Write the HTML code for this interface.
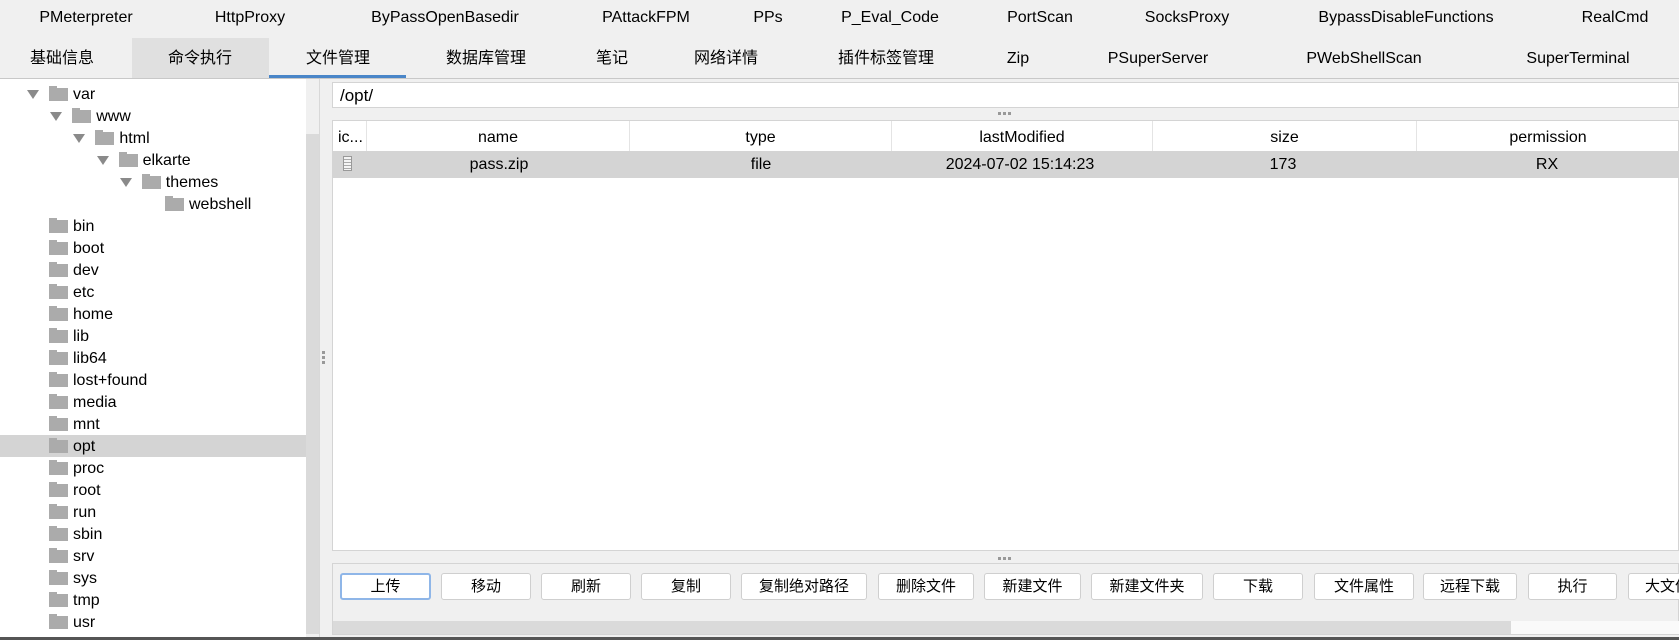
<!DOCTYPE html>
<html><head><meta charset="utf-8"><style>
*{margin:0;padding:0;box-sizing:border-box}
body{width:1679px;height:640px;background:#f0f0f0;font-family:"Liberation Sans","Noto Sans CJK SC",sans-serif;font-size:16px;color:#000;position:relative;overflow:hidden}
.a{position:absolute;white-space:nowrap}
.c{position:absolute;transform:translate(-50%,-50%);white-space:nowrap;line-height:20px;height:20px}
.btn{position:absolute;top:573px;height:27px;background:#fff;border:1px solid #cfcfcf;border-radius:3px;text-align:center;line-height:25px;font-size:15px}
.f{position:absolute;width:19px;height:15px}
.f:before{content:"";position:absolute;left:0;top:0;width:8px;height:3px;background:#ababab}
.f:after{content:"";position:absolute;left:0;top:2px;width:19px;height:13px;background:#ababab}
.ar{position:absolute;width:0;height:0;border-left:6px solid transparent;border-right:6px solid transparent;border-top:9px solid #8a8a8a}
.t{position:absolute;font-size:16px;line-height:20px;height:20px;transform:translateY(-50%)}
.h{position:absolute;top:121px;height:30px;border-right:1px solid #e4e4e4;text-align:center;line-height:34px}
</style></head><body>
<!-- top row -->
<span class="c" style="left:86px;top:18px">PMeterpreter</span>
<span class="c" style="left:250px;top:18px">HttpProxy</span>
<span class="c" style="left:445px;top:18px">ByPassOpenBasedir</span>
<span class="c" style="left:646px;top:18px">PAttackFPM</span>
<span class="c" style="left:768px;top:18px">PPs</span>
<span class="c" style="left:890px;top:18px">P_Eval_Code</span>
<span class="c" style="left:1040px;top:18px">PortScan</span>
<span class="c" style="left:1187px;top:18px">SocksProxy</span>
<span class="c" style="left:1406px;top:18px">BypassDisableFunctions</span>
<span class="c" style="left:1615px;top:18px">RealCmd</span>
<!-- tabs -->
<div class="a" style="left:132px;top:38px;width:137px;height:40px;background:#e0e0e0"></div>
<div class="a" style="left:269px;top:75px;width:137px;height:4px;background:#4a86c8"></div>
<div class="a" style="left:0;top:78px;width:1679px;height:1px;background:#c8c8c8"></div>
<span class="c" style="left:62px;top:59px">基础信息</span>
<span class="c" style="left:200px;top:59px">命令执行</span>
<span class="c" style="left:338px;top:59px">文件管理</span>
<span class="c" style="left:486px;top:59px">数据库管理</span>
<span class="c" style="left:612px;top:59px">笔记</span>
<span class="c" style="left:726px;top:59px">网络详情</span>
<span class="c" style="left:886px;top:59px">插件标签管理</span>
<span class="c" style="left:1018px;top:59px">Zip</span>
<span class="c" style="left:1158px;top:59px">PSuperServer</span>
<span class="c" style="left:1364px;top:59px">PWebShellScan</span>
<span class="c" style="left:1578px;top:59px">SuperTerminal</span>
<!-- left tree -->
<div class="a" style="left:0;top:79px;width:306px;height:558px;background:#fff"></div>
<div class="a" style="left:306px;top:79px;width:14px;height:558px;background:#f0f0f0;border-right:1px solid #d8d8d8"></div>
<div class="a" style="left:306px;top:134px;width:13px;height:500px;background:#dadada"></div>
<div class="a" style="left:0;top:435px;width:306px;height:22px;background:#d4d4d4"></div>
<div class="a" style="left:322px;top:351px;width:3px;height:3px;background:#999;box-shadow:0 5px #999,0 10px #999"></div>
<div id="tree"></div>
<!-- path -->
<div class="a" style="left:332px;top:82px;width:1347px;height:26px;background:#fff;border:1px solid #d4d4d4"></div>
<span class="t" style="left:340px;top:96px;font-size:17px">/opt/</span>
<div class="a" style="left:998px;top:112px;width:3px;height:3px;background:#999;box-shadow:5px 0 #999,10px 0 #999"></div>
<!-- table -->
<div class="a" style="left:332px;top:120px;width:1347px;height:431px;background:#fff;border:1px solid #d4d4d4"></div>
<div class="h" style="left:333px;width:34px;text-align:left;padding-left:5px">ic...</div>
<div class="h" style="left:367px;width:263px">name</div>
<div class="h" style="left:630px;width:262px">type</div>
<div class="h" style="left:892px;width:261px">lastModified</div>
<div class="h" style="left:1153px;width:264px">size</div>
<div class="h" style="left:1417px;width:262px;border:0">permission</div>
<div class="a" style="left:333px;top:151px;width:1346px;height:27px;background:#d4d4d4"></div>
<div class="a" style="left:343px;top:156px;width:9px;height:15px;background:#f4f4f4;border:1px solid #999;background-image:repeating-linear-gradient(#f4f4f4 0 2px,#aaa 2px 3px)"></div>
<span class="c" style="left:499px;top:165px">pass.zip</span>
<span class="c" style="left:761px;top:165px">file</span>
<span class="c" style="left:1020px;top:165px">2024-07-02 15:14:23</span>
<span class="c" style="left:1283px;top:165px">173</span>
<span class="c" style="left:1547px;top:165px">RX</span>
<div class="a" style="left:998px;top:557px;width:3px;height:3px;background:#999;box-shadow:5px 0 #999,10px 0 #999"></div>
<!-- button panel -->
<div class="a" style="left:332px;top:563px;width:1347px;height:72px;border:1px solid #d4d4d4;background:#f0f0f0"></div>
<div class="a" style="left:333px;top:621px;width:1178px;height:13px;background:#dadada"></div>
<div class="a" style="left:1511px;top:621px;width:168px;height:13px;background:#fafafa"></div>
<div class="btn" style="left:340px;width:91px;border:2px solid #8fb6e8;line-height:23px">上传</div>
<div class="btn" style="left:441px;width:90px">移动</div>
<div class="btn" style="left:541px;width:90px">刷新</div>
<div class="btn" style="left:641px;width:90px">复制</div>
<div class="btn" style="left:741px;width:126px">复制绝对路径</div>
<div class="btn" style="left:878px;width:96px">删除文件</div>
<div class="btn" style="left:984px;width:97px">新建文件</div>
<div class="btn" style="left:1091px;width:112px">新建文件夹</div>
<div class="btn" style="left:1213px;width:90px">下载</div>
<div class="btn" style="left:1314px;width:100px">文件属性</div>
<div class="btn" style="left:1423px;width:94px">远程下载</div>
<div class="btn" style="left:1528px;width:89px">执行</div>
<div class="btn" style="left:1628px;width:80px;text-align:left;padding-left:16px">大文件</div>
<div class="a" style="left:0;top:637px;width:1679px;height:3px;background:#555"></div>
<script>
var items=[["var",0,1],["www",1,1],["html",2,1],["elkarte",3,1],["themes",4,1],["webshell",5,0],
["bin",0,0],["boot",0,0],["dev",0,0],["etc",0,0],["home",0,0],["lib",0,0],["lib64",0,0],["lost+found",0,0],
["media",0,0],["mnt",0,0],["opt",0,0],["proc",0,0],["root",0,0],["run",0,0],["sbin",0,0],["srv",0,0],["sys",0,0],["tmp",0,0],["usr",0,0]];
var h="";
items.forEach(function(it,i){var y=94+22*i,x=49+it[1]*23.2;
if(it[2])h+='<div class="ar" style="left:'+(x-22)+'px;top:'+(y-4)+'px"></div>';
h+='<div class="f" style="left:'+x+'px;top:'+(y-8)+'px"></div>';
h+='<span class="t" style="left:'+(x+24)+'px;top:'+(y+1)+'px">'+it[0]+'</span>';});
document.getElementById("tree").innerHTML=h;
</script>
</body></html>
